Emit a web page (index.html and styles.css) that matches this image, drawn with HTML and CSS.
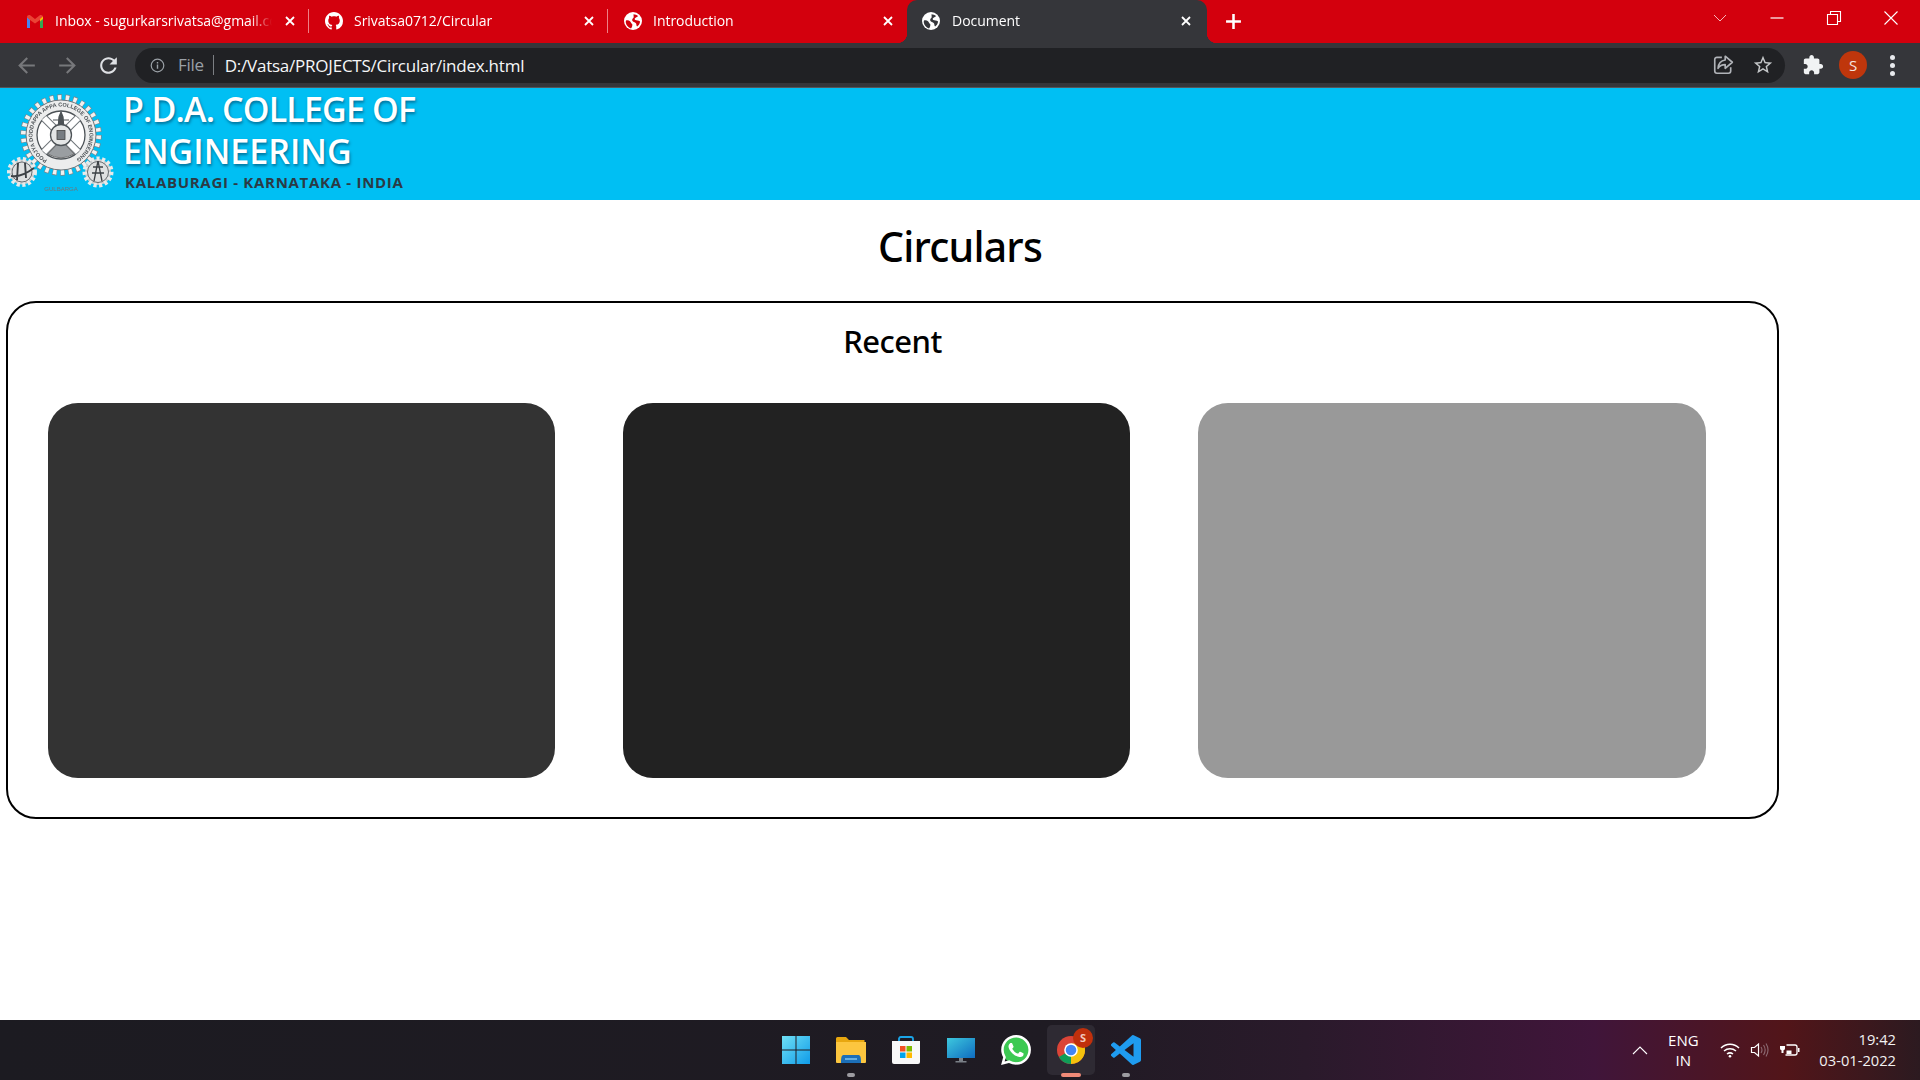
FILE: index.html
```html
<!DOCTYPE html>
<html lang="en">
<head>
    <meta charset="UTF-8">
    <meta name="viewport" content="width=device-width, initial-scale=1.0">
    <title>Document</title>
    <link rel="stylesheet" href="styles.css">
</head>
<body>

    <svg class="defs" width="0" height="0">
        <symbol id="globe" viewBox="0 0 18 18">
            <circle cx="9" cy="9" r="9" fill="#fff"/>
            <path d="M2 8.500c1.500-.5 3-.2 4 .8 1 1.100 1 2.200 2.200 2.700.5 1.400-.2 3.200-1.200 4.500-2.800-.8-5-3.200-5.300-6.400zM9.500 2.200c1.600 0 3.300.7 4.500 1.800-.3 1-1.500 1.200-2.400 1.700-1 .5-1.200 1.700-.3 2.300 1.200.7 3.200.2 4.800 1.500-.3 2.300-1.300 3.800-3 5-1-.8-.4-2.300-1.200-3.300-1-1.100-3-1-3.600-2.400-.5-1.300.5-2.300 1.200-3 .4-.9 0-2.300 0-3.600z" fill="currentColor"/>
        </symbol>
        <symbol id="close" viewBox="0 0 12 12">
            <path d="M2 2l8 8M10 2l-8 8" stroke="#fff" stroke-width="1.800" fill="none"/>
        </symbol>
    </svg>

    <div class="tabstrip">
        <div class="tab">
            <svg class="tab-icon" viewBox="0 0 18 14">
                <path d="M1 14V3l3 2v9z" fill="#4285f4"/>
                <path d="M14 14V5l3-2v11z" fill="#34a853"/>
                <path d="M1 3.500C1 1 3 .5 4.500 1.500L9 5l4.500-3.500C15 .5 17 1 17 3.500L14 6 9 9.500 4 6z" fill="#ea4335"/>
                <path d="M14 5l3-2.500V5l-3 2.500z" fill="#fbbc04"/>
            </svg>
            <span class="tab-title">Inbox - sugurkarsrivatsa@gmail.com</span>
            <svg class="tab-close"><use href="#close"/></svg>
        </div>
        <div class="tab-sep"></div>
        <div class="tab">
            <svg class="tab-icon" viewBox="0 0 16 16"><path fill="#fff" d="M8 0C3.58 0 0 3.58 0 8c0 3.54 2.29 6.53 5.47 7.59.4.07.55-.17.55-.38 0-.19-.01-.82-.01-1.490-2.010.37-2.530-.49-2.690-.94-.09-.23-.48-.94-.82-1.130-.28-.15-.68-.52-.01-.53.63-.01 1.080.58 1.230.82.72 1.210 1.870.87 2.330.66.07-.52.28-.87.51-1.070-1.780-.2-3.640-.89-3.640-3.950 0-.87.31-1.590.82-2.150-.08-.2-.36-1.020.08-2.120 0 0 .67-.21 2.200.82.64-.18 1.320-.27 2-.27.68 0 1.360.09 2 .27 1.530-1.040 2.200-.82 2.200-.82.44 1.100.16 1.920.08 2.120.51.56.82 1.270.82 2.150 0 3.070-1.870 3.750-3.650 3.950.29.25.54.73.54 1.480 0 1.070-.01 1.930-.01 2.200 0 .21.15.46.55.38A8.013 8.013 0 0016 8c0-4.420-3.580-8-8-8z"/></svg>
            <span class="tab-title">Srivatsa0712/Circular</span>
            <svg class="tab-close"><use href="#close"/></svg>
        </div>
        <div class="tab-sep"></div>
        <div class="tab">
            <svg class="tab-icon"><use href="#globe"/></svg>
            <span class="tab-title">Introduction</span>
            <svg class="tab-close"><use href="#close"/></svg>
        </div>
        <div class="tab active">
            <svg class="tab-icon"><use href="#globe"/></svg>
            <span class="tab-title">Document</span>
            <svg class="tab-close"><use href="#close"/></svg>
        </div>
        <svg class="new-tab" viewBox="0 0 16 16"><path d="M8 1v14M1 8h14" stroke="#fff" stroke-width="2.400"/></svg>

        <div class="window-controls">
            <svg class="win-btn" viewBox="0 0 16 16"><path d="M2 5l6 6 6-6" stroke="#f5b5b8" fill="none"/></svg>
            <svg class="win-btn" viewBox="0 0 16 16"><path d="M1.500 8h13" stroke="#fff" stroke-width="1.200"/></svg>
            <svg class="win-btn" viewBox="0 0 16 16"><path d="M1.500 4.500h10v10h-10zM4.500 4.500v-3h10v10h-3" stroke="#fff" stroke-width="1.100" fill="none"/></svg>
            <svg class="win-btn" viewBox="0 0 16 16"><path d="M1.500 1.500l13 13M14.500 1.500l-13 13" stroke="#fff" stroke-width="1.100"/></svg>
        </div>
    </div>

    <div class="toolbar">
        <div class="nav-btns">
            <svg class="nav-icon dim" viewBox="0 0 24 24"><path d="M20 11H7.830l5.590-5.590L12 4l-8 8 8 8 1.410-1.410L7.830 13H20v-2z"/></svg>
            <svg class="nav-icon dim" viewBox="0 0 24 24"><path d="M12 4l-1.410 1.410L16.170 11H4v2h12.170l-5.580 5.590L12 20l8-8z"/></svg>
            <svg class="nav-icon" viewBox="0 0 24 24"><path d="M17.650 6.350C16.200 4.900 14.210 4 12 4c-4.420 0-7.990 3.580-7.990 8s3.570 8 7.990 8c3.730 0 6.840-2.550 7.730-6h-2.080c-.82 2.330-3.040 4-5.650 4-3.310 0-6-2.690-6-6s2.690-6 6-6c1.660 0 3.140.69 4.220 1.780L13 11h7V4l-2.350 2.350z"/></svg>
        </div>
        <div class="omnibox">
            <svg class="info-icon" viewBox="0 0 16 16">
                <circle cx="8" cy="8" r="6.700" fill="none" stroke="#9aa0a6" stroke-width="1.300"/>
                <path d="M8 7v4.500M8 4.300v1.500" stroke="#9aa0a6" stroke-width="1.500"/>
            </svg>
            <span class="scheme">File</span>
            <span class="url">D:/Vatsa/PROJECTS/Circular/index.html</span>
            <div class="omni-actions">
                <svg class="omni-icon" viewBox="0 0 20 20">
                    <path d="M9 3H4.500A2 2 0 0 0 2.500 5v10.500a2 2 0 0 0 2 2H15a2 2 0 0 0 2-2V12" fill="none" stroke="#b0b3b8" stroke-width="1.500"/>
                    <path d="M12 2l6.500 5.500L12 13V9.700c-3 0-5 1-6.500 3.300.3-4 2.800-7 6.500-7.500z" fill="none" stroke="#b0b3b8" stroke-width="1.500" stroke-linejoin="round"/>
                </svg>
                <svg class="omni-icon" viewBox="0 0 24 24"><path fill="#c4c7c9" d="M22 9.240l-7.190-.62L12 2 9.190 8.630 2 9.240l5.460 4.730L5.820 21 12 17.270 18.180 21l-1.630-7.030L22 9.240zM12 15.400l-3.760 2.270 1-4.280-3.320-2.880 4.380-.38L12 6.100l1.710 4.040 4.380.38-3.320 2.880 1 4.280L12 15.400z"/></svg>
            </div>
        </div>
        <div class="toolbar-end">
            <svg class="puzzle" viewBox="0 0 24 24"><path fill="#f1f3f4" d="M20.500 11H19V7c0-1.100-.9-2-2-2h-4V3.500C13 2.120 11.880 1 10.500 1S8 2.120 8 3.500V5H4c-1.100 0-1.990.9-1.990 2v3.800H3.500c1.490 0 2.700 1.210 2.700 2.700s-1.210 2.700-2.700 2.700H2V20c0 1.100.9 2 2 2h3.800v-1.500c0-1.490 1.210-2.700 2.700-2.700 1.490 0 2.700 1.210 2.700 2.700V22H17c1.100 0 2-.9 2-2v-4h1.500c1.380 0 2.500-1.120 2.500-2.500S21.880 11 20.500 11z"/></svg>
            <div class="avatar">S</div>
            <div class="kebab"><i></i><i></i><i></i></div>
        </div>
    </div>

    <header class="banner">
        <svg class="logo" viewBox="0 0 112 112">
            <!-- main gear, teeth are a dashed ring -->
            <circle cx="56" cy="47" r="37" fill="none" stroke="#7f868a" stroke-width="7.500" stroke-dasharray="4.400 3.350"/>
            <circle cx="56" cy="47" r="37" fill="none" stroke="#f0f1f1" stroke-width="6" stroke-dasharray="3.400 4.350" stroke-dashoffset="-0.500"/>
            <circle cx="56" cy="47" r="35" fill="#eceded" stroke="#6f767a" stroke-width="1"/>
            <defs><path id="logo-arc" d="M56 75.500a28.500 28.500 0 1 1 .01 0"/></defs>
            <text class="logo-ring"><textPath href="#logo-arc" startOffset="8%">POOJYA DODDAPPA APPA COLLEGE OF ENGINEERING</textPath></text>
            <circle cx="56" cy="47" r="24" fill="#fff" stroke="#4c5256" stroke-width="1.300"/>
            <path d="M39 30l34 34M73 30L39 64" stroke="#6f757a" stroke-width="8"/>
            <path d="M39 30l34 34M73 30L39 64" stroke="#fff" stroke-width="6"/>
            <path d="M56 24l2 5 1 13h-6l1-13zM48 32h16" fill="#4c5256" stroke="#4c5256" stroke-width="1.200"/>
            <path d="M43 66l13-14 13 14a24 24 0 0 1-26 0z" fill="#9a9ea1" stroke="#555" stroke-width="0.700"/>
            <circle cx="56" cy="47" r="10.500" fill="#e4e6e6" stroke="#4c5256" stroke-width="1.300"/>
            <rect x="52" y="42.500" width="8" height="9" fill="#777d82" stroke="#444" stroke-width="0.800"/>

            <circle cx="17" cy="84" r="12.500" fill="#c9cccd" stroke="#e8eaea" stroke-width="5" stroke-dasharray="3 2.400"/>
            <circle cx="17" cy="84" r="10" fill="#dfe1e1" stroke="#5b6165" stroke-width="0.900"/>
            <path d="M6 88c6 1 15-2 23-8M13 75l-1 17M20 75l1 15" stroke="#3c4145" stroke-width="1.900" fill="none"/>
            <circle cx="93" cy="84" r="13" fill="#c9cccd" stroke="#e8eaea" stroke-width="5" stroke-dasharray="3 2.400"/>
            <circle cx="93" cy="84" r="10.500" fill="#dfe1e1" stroke="#5b6165" stroke-width="0.900"/>
            <path d="M93 73l-4 20M93 73l4 20M88 79h10M87 85h12" stroke="#3c4145" stroke-width="1.300" fill="none"/>
            <text class="logo-place" x="56" y="103">GULBARGA</text>
        </svg>
        <div class="college">
            <div class="college-name">P.D.A. COLLEGE OF<br><span class="college-name-end">ENGINEERING</span></div>
            <div class="college-place">KALABURAGI - KARNATAKA - INDIA</div>
        </div>
    </header>

    <main>
        <h1>Circulars</h1>
        <section class="recent">
            <h2>Recent</h2>
            <div class="cards">
                <div class="card card-a"></div>
                <div class="card card-b"></div>
                <div class="card card-c"></div>
            </div>
        </section>
    </main>

    <footer class="taskbar">
        <div></div>
        <div class="task-apps">
            <div class="task-app">
                <svg class="app-icon" viewBox="0 0 30 30">
                    <defs><linearGradient id="win" x1="0" y1="0" x2="1" y2="1"><stop offset="0" stop-color="#6fe0f5"/><stop offset="1" stop-color="#0f9be8"/></linearGradient></defs>
                    <path d="M1 1h13.500v13.500H1zM15.500 1H29v13.500H15.500zM1 15.500h13.500V29H1zM15.500 15.500H29V29H15.500z" fill="url(#win)"/>
                </svg>
            </div>
            <div class="task-app open">
                <svg class="app-icon" viewBox="0 0 30 30">
                    <path d="M0 3.500A1.500 1.500 0 0 1 1.500 2H10l3 3h15.500v6H0z" fill="#e8a70f"/>
                    <path d="M0 7h30v20a1 1 0 0 1-1 1H1a1 1 0 0 1-1-1z" fill="#fcc63f"/>
                    <path d="M5 27c0-6 1-7 3-7h14c2 0 3 1 3 7v1H5z" fill="#1c6fb8"/>
                    <path d="M9 24h12" stroke="#7fc5f0" stroke-width="1.500"/>
                </svg>
            </div>
            <div class="task-app">
                <svg class="app-icon" viewBox="0 0 30 30">
                    <path d="M8 7V3.500A2 2 0 0 1 10 2h10a2 2 0 0 1 2 2v3" fill="none" stroke="#1aa5e8" stroke-width="1.800"/>
                    <path d="M1 6h28v21a2 2 0 0 1-2 2H3a2 2 0 0 1-2-2z" fill="#f8f8f8"/>
                    <rect x="9" y="11" width="5.500" height="5.500" fill="#f25022"/>
                    <rect x="15.500" y="11" width="5.500" height="5.500" fill="#7fba00"/>
                    <rect x="9" y="17.500" width="5.500" height="5.500" fill="#00a4ef"/>
                    <rect x="15.500" y="17.500" width="5.500" height="5.500" fill="#ffb900"/>
                </svg>
            </div>
            <div class="task-app">
                <svg class="app-icon" viewBox="0 0 30 30">
                    <defs><linearGradient id="screen" x1="0" y1="0" x2="1" y2="1"><stop offset="0" stop-color="#3dc8de"/><stop offset="1" stop-color="#0f6cc0"/></linearGradient></defs>
                    <rect x="1" y="3" width="28" height="20" fill="url(#screen)"/>
                    <path d="M13 23h4v3h-4zM9.500 26h11v1.500h-11z" fill="#7a8087"/>
                </svg>
            </div>
            <div class="task-app">
                <svg class="app-icon" viewBox="0 0 24 24">
                    <circle cx="12" cy="12" r="11" fill="#3cc952"/>
                    <path fill="#fff" d="M17.472 14.382c-.297-.149-1.758-.867-2.030-.967-.273-.099-.471-.148-.67.15-.197.297-.767.966-.94 1.164-.173.199-.347.223-.644.075-.297-.15-1.255-.463-2.390-1.475-.883-.788-1.480-1.761-1.653-2.059-.173-.297-.018-.458.13-.606.134-.133.298-.347.446-.52.149-.174.198-.298.298-.497.099-.198.05-.371-.025-.52-.075-.149-.669-1.612-.916-2.207-.242-.579-.487-.5-.669-.51-.173-.008-.371-.01-.57-.01-.198 0-.52.074-.792.372-.272.297-1.040 1.016-1.040 2.479 0 1.462 1.065 2.875 1.213 3.074.149.198 2.096 3.200 5.077 4.487.709.306 1.262.489 1.694.625.712.227 1.360.195 1.871.118.571-.085 1.758-.719 2.006-1.413.248-.694.248-1.289.173-1.413-.074-.124-.272-.198-.57-.347m-5.421 7.403h-.004a9.870 9.870 0 01-5.031-1.378l-.361-.214-3.741.982.998-3.648-.235-.374a9.860 9.860 0 01-1.510-5.260c.001-5.450 4.436-9.884 9.888-9.884 2.640 0 5.122 1.030 6.988 2.898a9.825 9.825 0 012.893 6.994c-.003 5.450-4.437 9.884-9.885 9.884m8.413-18.297A11.815 11.815 0 0012.050 0C5.495 0 .16 5.335.157 11.892c0 2.096.547 4.142 1.588 5.945L.057 24l6.305-1.654a11.882 11.882 0 005.683 1.448h.005c6.554 0 11.890-5.335 11.893-11.893a11.821 11.821 0 00-3.480-8.413z"/>
                </svg>
            </div>
            <div class="task-app current">
                <svg class="app-icon" viewBox="0 0 30 30">
                    <circle cx="15" cy="15" r="14" fill="#db4437"/>
                    <path d="M15 15L27.100 8A14 14 0 0 1 15 29z" fill="#f4c20d"/>
                    <path d="M15 15V29A14 14 0 0 1 2.900 22z" fill="#0f9d58"/>
                    <path d="M15 8.500h12.100A14 14 0 0 1 21 27.600L15 15z" fill="#f4c20d"/>
                    <circle cx="15" cy="15" r="6.800" fill="#fff"/>
                    <circle cx="15" cy="15" r="5.300" fill="#4285f4"/>
                </svg>
                <div class="app-badge">S</div>
            </div>
            <div class="task-app open">
                <svg class="app-icon" viewBox="0 0 24 24"><path fill="#1f9cf0" d="M23.150 2.587L18.210.21a1.494 1.494 0 0 0-1.705.29l-9.460 8.630-4.120-3.128a.999.999 0 0 0-1.276.057L.327 7.261A1 1 0 0 0 .326 8.740L3.899 12 .326 15.260a1 1 0 0 0 .001 1.479L1.650 17.940a.999.999 0 0 0 1.276.057l4.120-3.128 9.460 8.630a1.492 1.492 0 0 0 1.704.29l4.942-2.377A1.500 1.500 0 0 0 24 20.060V3.939a1.500 1.500 0 0 0-.85-1.352zm-5.146 14.861L10.826 12l7.178-5.448v10.896z"/></svg>
            </div>
        </div>
        <div class="tray">
            <svg class="tray-chevron" viewBox="0 0 16 10"><path d="M1 9l7-7 7 7" stroke="#fff" stroke-width="1.100" fill="none"/></svg>
            <div class="lang">ENG<br>IN</div>
            <svg class="tray-icon" viewBox="0 0 20 16">
                <path d="M1 6c5-5 13-5 18 0M4 9c3.500-3 8.500-3 12 0M7 12c2-1.500 4-1.500 6 0" stroke="#fff" stroke-width="1.500" fill="none"/>
                <circle cx="10" cy="14.300" r="1.300" fill="#fff"/>
            </svg>
            <svg class="tray-icon" viewBox="0 0 20 16">
                <path d="M1.500 5.500h3l4-3.500v12l-4-3.500h-3z" fill="none" stroke="#fff" stroke-width="1.200"/>
                <path d="M11 5c1.200 1.800 1.200 4.200 0 6M13.500 3c2 3 2 7 0 10M16 1.500c2.500 4 2.500 9 0 13" stroke="#8c6a72" stroke-width="1.100" fill="none"/>
            </svg>
            <svg class="tray-icon" viewBox="0 0 20 16">
                <path d="M1 1.500v3M4 1.500v3M0 4h5v2.500a2 2 0 0 1-1.500 1.800V11H1.500V8.300A2 2 0 0 1 0 6.500z" fill="#fff"/>
                <path d="M6.500 3H15a2 2 0 0 1 2 2v6a2 2 0 0 1-2 2H5.500" fill="none" stroke="#fff" stroke-width="1.300"/>
                <path d="M18 6h1.500v4H18z" fill="#fff"/>
                <path d="M6.500 8.500h5V12h-5z" fill="#fff"/>
            </svg>
            <div class="clock">19:42<br>03-01-2022</div>
        </div>
    </footer>

</body>
</html>
```

FILE: styles.css
```css
* {
    box-sizing: border-box;
}
body {
    margin: 0;
    height: 1080px;
    overflow: hidden;
    display: flex;
    flex-direction: column;
    background: #fff;
    font-family: "Open Sans", "Noto Sans", sans-serif;
    color: #000;
}
.defs {
    position: absolute;
}

/* browser tabs */
.tabstrip {
    height: 43px;
    flex-shrink: 0;
    display: flex;
    align-items: stretch;
    padding-left: 10px;
    background: #d3000d;
    color: #d3000d;
}
.tab {
    width: 298px;
    display: flex;
    align-items: center;
    padding: 0 12px 2px 16px;
    color: #d3000d;
}
.tab-sep {
    width: 1px;
    height: 24px;
    margin-top: 9px;
    background: #ee8086;
}
.tab + .tab.active {
    margin-left: 1px;
    width: 300px;
    padding: 0 15px 2px 15px;
    color: #35363a;
    background: #35363a;
    border-radius: 10px 10px 0 0;
    position: relative;
}
.tab.active::before,
.tab.active::after {
    content: "";
    position: absolute;
    bottom: 0;
    width: 10px;
    height: 10px;
}
.tab.active::before {
    left: -10px;
    background: radial-gradient(circle at 0 0, transparent 10px, #35363a 10.500px);
}
.tab.active::after {
    right: -10px;
    background: radial-gradient(circle at 100% 0, transparent 10px, #35363a 10.500px);
}
.tab-icon {
    width: 18px;
    height: 18px;
    flex-shrink: 0;
    margin-right: 11px;
}
.tab.active .tab-icon {
    margin-right: 12px;
}
.tab-title {
    flex: 1;
    margin-right: 12px;
    font-size: 14px;
    letter-spacing: -0.03px;
    color: #fff;
    white-space: nowrap;
    overflow: hidden;
    -webkit-mask-image: linear-gradient(90deg, #000 90%, transparent 100%);
    mask-image: linear-gradient(90deg, #000 90%, transparent 100%);
}
.tab-close {
    width: 12px;
    height: 12px;
    flex-shrink: 0;
}
.new-tab {
    width: 17px;
    height: 17px;
    margin: 13px 0 0 18px;
}
.window-controls {
    margin-left: auto;
    display: flex;
    padding: 10px 21px 0 0;
}
.win-btn {
    width: 16px;
    height: 16px;
    margin-left: 41px;
}

/* address bar */
.toolbar {
    height: 45px;
    flex-shrink: 0;
    display: flex;
    align-items: center;
    background: #35363a;
    border-bottom: 1px solid #55565a;
}
.nav-btns {
    width: 135px;
    display: flex;
    gap: 16px;
    padding-left: 14px;
}
.nav-icon {
    width: 25px;
    height: 25px;
    fill: #dfe1e5;
}
.nav-icon.dim {
    fill: #77787b;
}
.omnibox {
    width: 1650px;
    height: 35px;
    display: flex;
    align-items: center;
    padding-left: 15px;
    background: #202124;
    border-radius: 18px;
}
.info-icon {
    width: 15px;
    height: 15px;
    margin-right: 13px;
}
.scheme {
    font-size: 17px;
    letter-spacing: -0.3px;
    color: #9aa0a6;
    padding-right: 9px;
    border-right: 1px solid #7c7f83;
    line-height: 20px;
    margin-right: 11px;
}
.url {
    font-size: 17px;
    letter-spacing: -0.23px;
    color: #f6f7f8;
}
.omni-actions {
    margin-left: auto;
    display: flex;
    gap: 18px;
    padding-right: 11px;
}
.omni-icon {
    width: 22px;
    height: 22px;
}
.toolbar-end {
    flex: 1;
    display: flex;
    align-items: center;
    padding-left: 17px;
}
.puzzle {
    width: 22px;
    height: 22px;
}
.avatar {
    width: 28px;
    height: 28px;
    margin-left: 15px;
    border-radius: 50%;
    background: #bf360c;
    color: #f6e6e0;
    font-size: 15px;
    line-height: 28px;
    text-align: center;
}
.kebab {
    display: flex;
    flex-direction: column;
    gap: 3px;
    margin-left: 23px;
}
.kebab i {
    width: 5px;
    height: 5px;
    border-radius: 50%;
    background: #e8eaed;
}

/* college banner */
.banner {
    height: 112px;
    flex-shrink: 0;
    display: flex;
    background: #00bff3;
}
.logo {
    width: 112px;
    height: 112px;
    margin-left: 5px;
    flex-shrink: 0;
    filter: blur(0.4px);
}
.logo-ring {
    font-family: "Liberation Sans", sans-serif;
    font-size: 5.500px;
    font-weight: 700;
    fill: #4c5256;
}
.logo-place {
    font-family: "Liberation Sans", sans-serif;
    font-size: 6px;
    fill: #6f757a;
    text-anchor: middle;
}
.college {
    margin-left: 6px;
}
.college-name {
    font-size: 34px;
    font-weight: 600;
    line-height: 42px;
    letter-spacing: -0.85px;
    color: #fff;
    text-shadow: 1px 2px 3px rgba(0, 50, 80, 0.55);
}
.college-name-end {
    letter-spacing: 0;
}
.college-place {
    font-size: 15px;
    font-weight: 700;
    line-height: 18px;
    letter-spacing: 0.7px;
    color: #2c3a45;
    margin: 1px 0 0 2px;
}

/* page content */
main {
    flex: 1;
}
h1 {
    margin: 0;
    padding-top: 20px;
    font-family: "Noto Sans", sans-serif;
    font-size: 41px;
    font-weight: 500;
    line-height: 52px;
    letter-spacing: -0.8px;
    text-align: center;
}
.recent {
    width: 1773px;
    margin: 29px 0 0 6px;
    padding: 19px 40px 39px;
    border: 2px solid #000;
    border-radius: 30px;
}
h2 {
    margin: 0 0 43px;
    font-family: "Noto Sans", sans-serif;
    font-size: 31px;
    font-weight: 500;
    line-height: 38px;
    letter-spacing: -0.5px;
    text-align: center;
}
.cards {
    display: flex;
    gap: 68px;
}
.card {
    width: 507.200px;
    height: 375px;
    border-radius: 30px;
}
.card-a {
    background: #333;
}
.card-b {
    background: #222;
}
.card-c {
    background: #999;
}

/* windows taskbar */
.taskbar {
    height: 60px;
    flex-shrink: 0;
    display: grid;
    grid-template-columns: 1fr auto 1fr;
    background: linear-gradient(90deg, #1c1b21 0%, #1f1b23 55%, #2a1a2b 68%, #40153a 83%, #521519 93%, #2c1a20 100%);
    color: #fff;
}
.task-apps {
    display: flex;
    align-items: center;
    margin-left: 2px;
}
.task-app {
    width: 55px;
    height: 50px;
    display: flex;
    align-items: center;
    justify-content: center;
    position: relative;
    border-radius: 5px;
}
.app-icon {
    width: 30px;
    height: 30px;
}
.task-app.open::after,
.task-app.current::after {
    content: "";
    position: absolute;
    bottom: -2px;
    left: calc(50% - 4px);
    width: 8px;
    height: 4px;
    border-radius: 2px;
    background: #9d9ca1;
}
.task-app.current {
    width: 48px;
    margin: 0 3.500px;
    background: #2e2a33;
}
.task-app.current::after {
    left: calc(50% - 10px);
    width: 20px;
    background: #f08a78;
}
.app-badge {
    position: absolute;
    top: 3px;
    right: 2px;
    width: 20px;
    height: 20px;
    border-radius: 50%;
    background: #c0300c;
    color: #f3c9bd;
    font-size: 11px;
    font-weight: 700;
    line-height: 20px;
    text-align: center;
}
.tray {
    display: flex;
    align-items: center;
    justify-content: flex-end;
    padding-right: 24px;
}
.tray-chevron {
    width: 16px;
    height: 10px;
    margin-right: 17px;
}
.lang {
    width: 36px;
    font-size: 15px;
    line-height: 20px;
    text-align: center;
    margin-right: 19px;
}
.tray-icon {
    width: 20px;
    height: 16px;
    margin-right: 10px;
}
.clock {
    margin-left: 9px;
    font-size: 14.700px;
    line-height: 21px;
    text-align: right;
    color: #f2f2f2;
}
```
